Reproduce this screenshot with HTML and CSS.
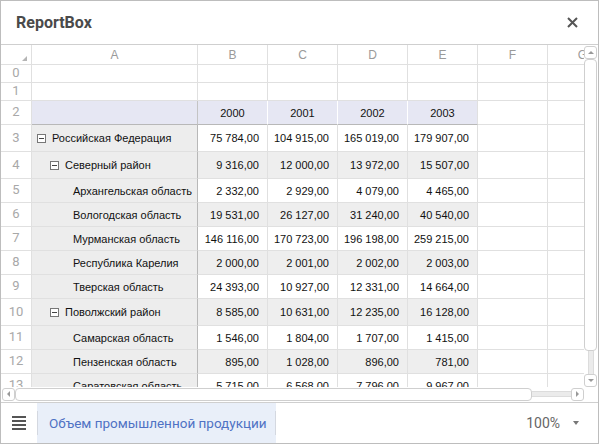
FILE: index.html
```html
<!DOCTYPE html>
<html lang="ru">
<head>
  <meta charset="UTF-8">
  <title>ReportBox</title>
  <link rel="stylesheet" href="styles.css">
</head>
<body>
  <div class="dialog">
    <div class="header">
      <span class="title">ReportBox</span>
      <svg class="close" width="11" height="11" viewBox="0 0 11 11">
        <path d="M1 1L10 10M10 1L1 10" stroke="#555" stroke-width="2"/>
      </svg>
    </div>

    <div class="sheet">
      <div class="viewport">
        <div class="row head">
          <div class="num corner"></div>
          <div class="cell">A</div>
          <div class="cell">B</div>
          <div class="cell">C</div>
          <div class="cell">D</div>
          <div class="cell">E</div>
          <div class="cell">F</div>
          <div class="cell">G</div>
        </div>
        <div class="row r18">
          <div class="num">0</div>
          <div class="cell"></div><div class="cell"></div><div class="cell"></div><div class="cell"></div><div class="cell"></div><div class="cell"></div><div class="cell"></div>
        </div>
        <div class="row r18">
          <div class="num">1</div>
          <div class="cell"></div><div class="cell"></div><div class="cell"></div><div class="cell"></div><div class="cell"></div><div class="cell"></div><div class="cell"></div>
        </div>
        <div class="row r24 years">
          <div class="num">2</div>
          <div class="cell label"></div>
          <div class="cell val">2000</div>
          <div class="cell val">2001</div>
          <div class="cell val">2002</div>
          <div class="cell val">2003</div>
          <div class="cell plain"></div>
          <div class="cell plain"></div>
        </div>
        <div class="row r27">
          <div class="num">3</div>
          <div class="cell label lvl0"><span class="toggle"></span>Российская Федерация</div>
          <div class="cell val">75 784,00</div>
          <div class="cell val">104 915,00</div>
          <div class="cell val">165 019,00</div>
          <div class="cell val">179 907,00</div>
          <div class="cell plain"></div>
          <div class="cell plain"></div>
        </div>
        <div class="row r27 alt">
          <div class="num">4</div>
          <div class="cell label lvl1"><span class="toggle"></span>Северный район</div>
          <div class="cell val">9 316,00</div>
          <div class="cell val">12 000,00</div>
          <div class="cell val">13 972,00</div>
          <div class="cell val">15 507,00</div>
          <div class="cell plain"></div>
          <div class="cell plain"></div>
        </div>
        <div class="row r24">
          <div class="num">5</div>
          <div class="cell label lvl2">Архангельская область</div>
          <div class="cell val">2 332,00</div>
          <div class="cell val">2 929,00</div>
          <div class="cell val">4 079,00</div>
          <div class="cell val">4 465,00</div>
          <div class="cell plain"></div>
          <div class="cell plain"></div>
        </div>
        <div class="row r24 alt">
          <div class="num">6</div>
          <div class="cell label lvl2">Вологодская область</div>
          <div class="cell val">19 531,00</div>
          <div class="cell val">26 127,00</div>
          <div class="cell val">31 240,00</div>
          <div class="cell val">40 540,00</div>
          <div class="cell plain"></div>
          <div class="cell plain"></div>
        </div>
        <div class="row r24">
          <div class="num">7</div>
          <div class="cell label lvl2">Мурманская область</div>
          <div class="cell val">146 116,00</div>
          <div class="cell val">170 723,00</div>
          <div class="cell val">196 198,00</div>
          <div class="cell val">259 215,00</div>
          <div class="cell plain"></div>
          <div class="cell plain"></div>
        </div>
        <div class="row r24 alt">
          <div class="num">8</div>
          <div class="cell label lvl2">Республика Карелия</div>
          <div class="cell val">2 000,00</div>
          <div class="cell val">2 001,00</div>
          <div class="cell val">2 002,00</div>
          <div class="cell val">2 003,00</div>
          <div class="cell plain"></div>
          <div class="cell plain"></div>
        </div>
        <div class="row r24">
          <div class="num">9</div>
          <div class="cell label lvl2">Тверская область</div>
          <div class="cell val">24 393,00</div>
          <div class="cell val">10 927,00</div>
          <div class="cell val">12 331,00</div>
          <div class="cell val">14 664,00</div>
          <div class="cell plain"></div>
          <div class="cell plain"></div>
        </div>
        <div class="row r27 alt">
          <div class="num">10</div>
          <div class="cell label lvl1"><span class="toggle"></span>Поволжский район</div>
          <div class="cell val">8 585,00</div>
          <div class="cell val">10 631,00</div>
          <div class="cell val">12 235,00</div>
          <div class="cell val">16 128,00</div>
          <div class="cell plain"></div>
          <div class="cell plain"></div>
        </div>
        <div class="row r24">
          <div class="num">11</div>
          <div class="cell label lvl2">Самарская область</div>
          <div class="cell val">1 546,00</div>
          <div class="cell val">1 804,00</div>
          <div class="cell val">1 707,00</div>
          <div class="cell val">1 415,00</div>
          <div class="cell plain"></div>
          <div class="cell plain"></div>
        </div>
        <div class="row r24 alt">
          <div class="num">12</div>
          <div class="cell label lvl2">Пензенская область</div>
          <div class="cell val">895,00</div>
          <div class="cell val">1 028,00</div>
          <div class="cell val">896,00</div>
          <div class="cell val">781,00</div>
          <div class="cell plain"></div>
          <div class="cell plain"></div>
        </div>
        <div class="row r24">
          <div class="num">13</div>
          <div class="cell label lvl2">Саратовская область</div>
          <div class="cell val">5 715,00</div>
          <div class="cell val">6 568,00</div>
          <div class="cell val">7 796,00</div>
          <div class="cell val">9 967,00</div>
          <div class="cell plain"></div>
          <div class="cell plain"></div>
        </div>
      </div>

      <div class="vscroll">
        <div class="sbtn"><span class="arr up"></span></div>
        <div class="vthumb"></div>
        <div class="vtrack"></div>
        <div class="sbtn"><span class="arr down"></span></div>
      </div>

      <div class="hscroll">
        <div class="sbtn"><span class="arr left"></span></div>
        <div class="hthumb"></div>
        <div class="htrack"></div>
        <div class="sbtn"><span class="arr right"></span></div>
      </div>
    </div>

    <div class="footer">
      <svg class="menu" width="14" height="14" viewBox="0 0 14 14">
        <rect x="0" y="0" width="14" height="2" fill="#555"/>
        <rect x="0" y="4" width="14" height="2" fill="#555"/>
        <rect x="0" y="8" width="14" height="2" fill="#555"/>
        <rect x="0" y="12" width="14" height="2" fill="#555"/>
      </svg>
      <div class="tab">Объем промышленной продукции</div>
      <div class="zoom">100% <span class="caret"></span></div>
    </div>
  </div>
</body>
</html>
```

FILE: styles.css
```css
body {
  margin: 0;
  background: #fff;
  font-family: "Liberation Sans", Arial, sans-serif;
}
.dialog {
  width: 599px;
  height: 444px;
  border: 1px solid #bdbdbd;
  box-sizing: border-box;
  display: flex;
  flex-direction: column;
  overflow: hidden;
}
.header {
  height: 43px;
  flex: none;
  border-bottom: 1px solid #cfcfcf;
  display: flex;
  align-items: center;
  justify-content: space-between;
  padding: 0 20px 0 15px;
}
.title {
  font-family: Roboto, sans-serif;
  font-weight: bold;
  font-size: 16px;
  color: #4a4a4a;
  margin-top: -1px;
}
.close {
  margin-top: -1px;
}

/* sheet area */
.sheet {
  height: 357px;
  flex: none;
  display: grid;
  grid-template-columns: 583px 13px;
  grid-template-rows: 342px 14px;
}
.viewport {
  overflow: hidden;
}
.row {
  display: grid;
  grid-template-columns: 31px 166px repeat(6, 70px);
  height: 24px;
}
.row.head { height: 20px; }
.row.r18 { height: 18px; }
.row.r24 { height: 24px; }
.row.r27 { height: 27px; }
.num,
.cell {
  box-sizing: border-box;
  border-right: 1px solid #e0e0e0;
  border-bottom: 1px solid #e0e0e0;
  display: flex;
  align-items: center;
  white-space: nowrap;
  overflow: hidden;
  font-size: 11px;
  color: #111;
}
.num {
  justify-content: center;
  font-family: Roboto, sans-serif;
  font-size: 13px;
  color: #a8a8a8;
  padding-bottom: 2px;
}
.head .cell {
  justify-content: center;
  color: #9a9a9a;
  font-size: 12px;
}
.corner {
  position: relative;
}
.corner::after {
  content: "";
  position: absolute;
  right: 4px;
  bottom: 3px;
  border-left: 5px solid transparent;
  border-bottom: 5px solid #b5b5b5;
}
.cell.val {
  justify-content: flex-end;
  padding-right: 8px;
}
.alt .cell.val {
  background: #eeeeee;
}
.cell.label {
  background: #ededed;
  border-right-color: #b8b8b8;
}
.years .cell.label,
.years .cell.val {
  background: #e6e7f3;
  border-right-color: #fff;
  border-bottom-color: #b8b8b8;
}
.years .cell.label {
  border-right-color: #c4c4c4;
}
.years .cell.val {
  justify-content: center;
  padding-right: 0;
}
.years .cell.val:nth-child(6) {
  border-right-color: #e0e0e0;
}
.lvl0 { padding-left: 5px; }
.lvl1 { padding-left: 18px; }
.lvl2 { padding-left: 41px; }
.toggle {
  width: 9px;
  height: 9px;
  box-sizing: border-box;
  border: 1px solid #777;
  background: #fff;
  margin-right: 6px;
  position: relative;
  flex: none;
}
.toggle::after {
  content: "";
  position: absolute;
  left: 1px;
  right: 1px;
  top: 3px;
  height: 1px;
  background: #444;
}

/* scrollbars */
.vscroll {
  display: flex;
  flex-direction: column;
  align-items: center;
  padding-top: 1px;
}
.hscroll {
  display: flex;
  align-items: center;
  padding-left: 1px;
}
.sbtn {
  width: 13px;
  height: 13px;
  box-sizing: border-box;
  border: 1px solid #cfcfcf;
  border-radius: 3px;
  background: #fff;
  display: flex;
  align-items: center;
  justify-content: center;
  flex: none;
}
.arr {
  width: 0;
  height: 0;
}
.arr.up {
  border-left: 3px solid transparent;
  border-right: 3px solid transparent;
  border-bottom: 3px solid #999;
}
.arr.down {
  border-left: 3px solid transparent;
  border-right: 3px solid transparent;
  border-top: 3px solid #999;
}
.arr.left {
  border-top: 3px solid transparent;
  border-bottom: 3px solid transparent;
  border-right: 3px solid #999;
}
.arr.right {
  border-top: 3px solid transparent;
  border-bottom: 3px solid transparent;
  border-left: 3px solid #999;
}
.vthumb {
  width: 13px;
  height: 292px;
  box-sizing: border-box;
  border: 1px solid #cfcfcf;
  border-radius: 4px;
  background: #fff;
  flex: none;
}
.vtrack {
  width: 6px;
  flex: 1;
  box-sizing: border-box;
  background: #ebebeb;
  border-left: 1px solid #dcdcdc;
  border-right: 1px solid #dcdcdc;
}
.hthumb {
  width: 517px;
  height: 13px;
  box-sizing: border-box;
  border: 1px solid #cfcfcf;
  border-radius: 4px;
  background: #fff;
  flex: none;
}
.htrack {
  height: 6px;
  flex: 1;
  box-sizing: border-box;
  background: #ebebeb;
  border-top: 1px solid #dcdcdc;
  border-bottom: 1px solid #dcdcdc;
}

/* footer */
.footer {
  flex: 1;
  border-top: 1px solid #cfcfcf;
  display: flex;
  align-items: stretch;
}
.menu {
  align-self: center;
  margin: 0 11px 0 11px;
}
.tab {
  position: relative;
  background: #e9eff9;
  color: #4f72c4;
  font-family: Roboto, sans-serif;
  font-size: 13.5px;
  white-space: nowrap;
  display: flex;
  align-items: center;
  padding: 0 0 0 12px;
  width: 227px;
}
.tab::before,
.tab::after {
  content: "";
  position: absolute;
  top: 8px;
  bottom: 8px;
  width: 1px;
  background: #d4d8e0;
}
.tab::before { left: 0; }
.tab::after { right: 0; }
.zoom {
  margin-left: auto;
  display: flex;
  align-items: center;
  font-family: Roboto, sans-serif;
  font-size: 14px;
  color: #666;
  padding-right: 19px;
}
.caret {
  margin-left: 13px;
  border-left: 3px solid transparent;
  border-right: 3px solid transparent;
  border-top: 4px solid #777;
}
```
